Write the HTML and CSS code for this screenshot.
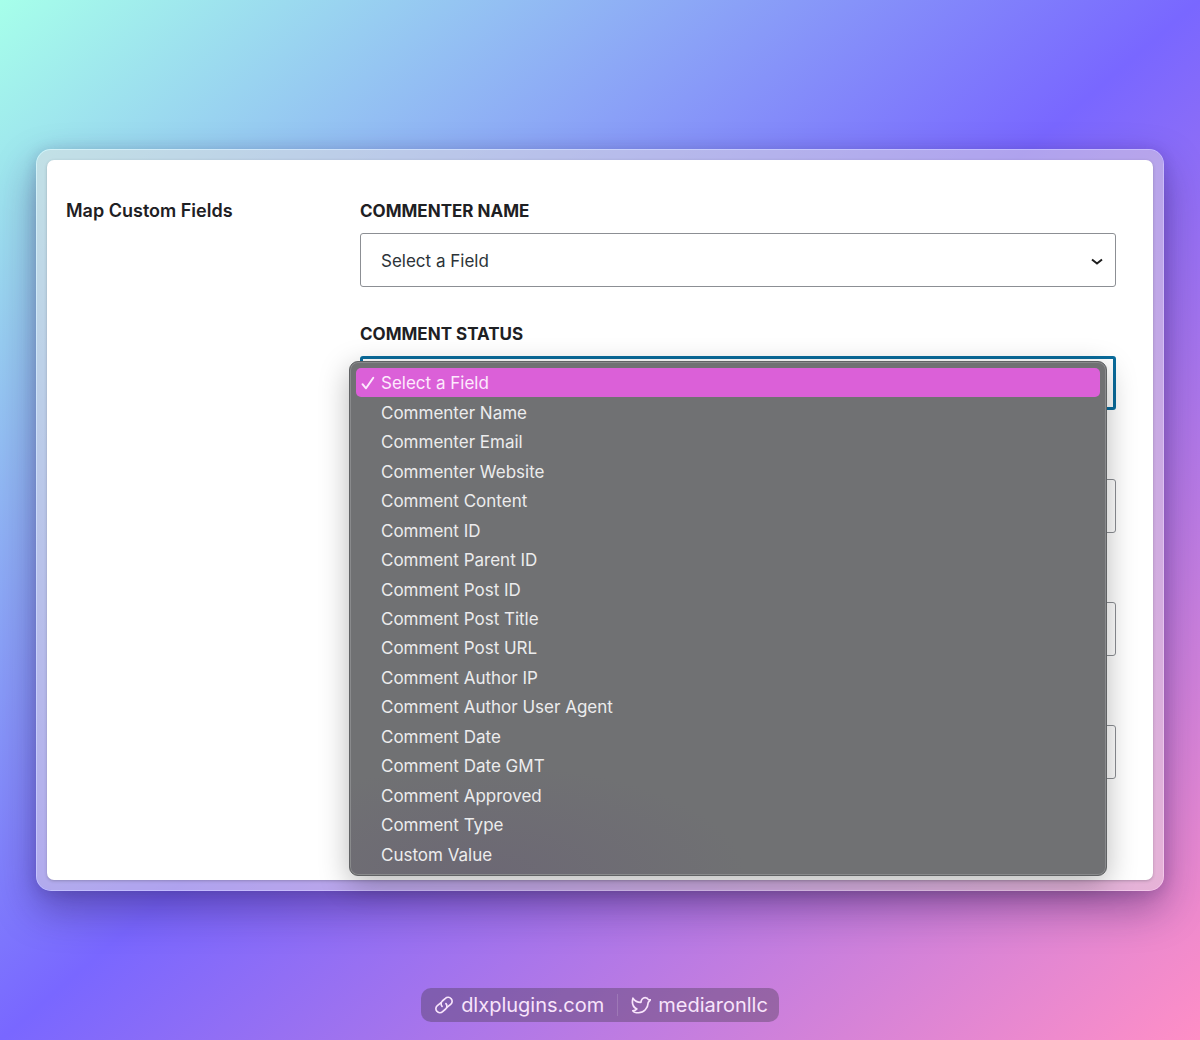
FILE: index.html
```html
<!DOCTYPE html>
<html lang="en">
<head>
    <meta charset="UTF-8">
    <meta name="viewport" content="width=device-width, initial-scale=1.0">
    <title>Map Custom Fields</title>
    <link rel="stylesheet" href="styles.css">
</head>
<body>
    <main class="frame">
        <section class="panel">
            <h2 class="panel-title">Map Custom Fields</h2>

            <form class="fields">
                <div class="field">
                    <label class="field-label" for="commenterName">Commenter Name</label>
                    <select class="field-select" id="commenterName">
                        <option>Select a Field</option>
                    </select>
                </div>

                <!-- Open field -->
                <div class="field">
                    <label class="field-label" for="commentStatus">Comment Status</label>
                    <select class="field-select active" id="commentStatus">
                        <option>Select a Field</option>
                    </select>
                    <div class="menu" role="listbox" aria-label="Comment Status">
                        <button type="button" class="menu-item selected" role="option" aria-selected="true">
                            <svg class="check" viewBox="0 0 14 14" aria-hidden="true"><path d="M1.5 8.2 L5 12.3 L12.3 1.7"/></svg>
                            Select a Field
                        </button>
                        <button type="button" class="menu-item" role="option">Commenter Name</button>
                        <button type="button" class="menu-item" role="option">Commenter Email</button>
                        <button type="button" class="menu-item" role="option">Commenter Website</button>
                        <button type="button" class="menu-item" role="option">Comment Content</button>
                        <button type="button" class="menu-item" role="option">Comment ID</button>
                        <button type="button" class="menu-item" role="option">Comment Parent ID</button>
                        <button type="button" class="menu-item" role="option">Comment Post ID</button>
                        <button type="button" class="menu-item" role="option">Comment Post Title</button>
                        <button type="button" class="menu-item" role="option">Comment Post URL</button>
                        <button type="button" class="menu-item" role="option">Comment Author IP</button>
                        <button type="button" class="menu-item" role="option">Comment Author User Agent</button>
                        <button type="button" class="menu-item" role="option">Comment Date</button>
                        <button type="button" class="menu-item" role="option">Comment Date GMT</button>
                        <button type="button" class="menu-item" role="option">Comment Approved</button>
                        <button type="button" class="menu-item" role="option">Comment Type</button>
                        <button type="button" class="menu-item" role="option">Custom Value</button>
                    </div>
                </div>

                <div class="field">
                    <select class="field-select" aria-label="Field 3"></select>
                </div>
                <div class="field">
                    <select class="field-select" aria-label="Field 4"></select>
                </div>
                <div class="field">
                    <select class="field-select" aria-label="Field 5"></select>
                </div>
            </form>
        </section>
    </main>

    <footer class="credits">
        <a class="credit" href="#">
            <svg class="credit-icon" viewBox="0 0 24 24" aria-hidden="true">
                <path d="M8.500 9.200L4 12.800a4.600 4.600 0 0 0-.5 6.800 4.600 4.600 0 0 0 6.800.4l3.700-3.200a4.600 4.600 0 0 0 .3-6.500"/>
                <path d="M15.500 14.800L20 11.200a4.600 4.600 0 0 0 .5-6.800 4.600 4.600 0 0 0-6.800-.4L10 7.200a4.600 4.600 0 0 0-.3 6.500"/>
            </svg>
            dlxplugins.com
        </a>
        <a class="credit" href="#">
            <svg class="credit-icon" viewBox="0 0 24 24" aria-hidden="true">
                <path d="M12 8.8c0-3.2 2.2-5.6 5-5.6 1.900 0 3.300 1 4 2.500h2.500l-2.800 3.200C20.300 16 15.500 21.300 9 21.300c-3.500 0-6-1-6.800-2.300 2-.2 3.800-1 4.800-2.200C2.500 14.500.8 9.500 2.300 3.800 4.500 7 8 8.900 12 8.800z"/>
            </svg>
            mediaronllc
        </a>
    </footer>
</body>
</html>
```
FILE: styles.css
```css
* {
    box-sizing: border-box;
}

body {
    display: flex;
    flex-direction: column;
    min-height: 100vh;
    margin: 0;
    padding: 149px 36px 18px;
    font-family: Inter, "Liberation Sans", sans-serif;
    color: #1e2023;
    background: linear-gradient(to bottom right, #a6ffea 0%, #7967ff 50%, #ff8fc6 100%);
}

.frame {
    padding: 10px;
    border: 1px solid rgba(255, 255, 255, 0.55);
    border-radius: 15px;
    background: rgba(230, 222, 222, 0.5);
    background-clip: padding-box;
    box-shadow: 0 18px 40px rgba(40, 20, 80, 0.4), 0 2px 14px rgba(40, 20, 80, 0.16);
}

.panel {
    display: grid;
    grid-template-columns: 294px 1fr;
    padding: 37px 37px 101px 19px;
    border-radius: 7px;
    background: white;
    box-shadow: 0 1px 3px rgba(60, 60, 70, 0.3);
}

.panel-title {
    margin: 0;
    font-size: 18px;
    font-weight: 600;
    line-height: 28px;
}

.fields {
    display: flex;
    flex-direction: column;
    gap: 33px;
}

.field {
    position: relative;
    display: flex;
    flex-direction: column;
    justify-content: flex-end;
    min-height: 90px;
}

.field-label {
    margin-bottom: 8px;
    font-size: 17px;
    font-weight: 700;
    line-height: 28px;
    text-transform: uppercase;
}

.field-select {
    width: 100%;
    height: 54px;
    padding: 2px 20px 0;
    border: 1px solid #8c8f94;
    border-radius: 3px;
    appearance: none;
    font-family: inherit;
    font-size: 17px;
    color: #2c3338;
    background: white url('data:image/svg+xml,<svg xmlns="http://www.w3.org/2000/svg" viewBox="0 0 14 8" width="14" height="8"><path d="M2 1.5l5 4 5-4" fill="none" stroke="%231e1e1e" stroke-width="2"/></svg>') no-repeat right 11px top 24px;
}

.field-select.active {
    border: 3px solid #0a6c9c;
}

/* Dropdown list */
.menu {
    position: absolute;
    top: 41px;
    left: -11px;
    right: 9px;
    z-index: 10;
    display: flex;
    flex-direction: column;
    height: 515px;
    padding: 6px;
    border: 1px solid #606264;
    border-radius: 9px;
    background: radial-gradient(ellipse 260px 110px at 18% 100%, #6c6874, transparent), #707173;
    box-shadow: inset 0 0 0 1px #898a8c, 0 8px 30px rgba(0, 0, 0, 0.28);
}

.menu-item {
    position: relative;
    flex: 1;
    padding: 1px 25px 0;
    border: none;
    border-radius: 5px;
    font-family: inherit;
    font-size: 17px;
    text-align: left;
    color: #ececed;
    background: none;
}

.menu-item.selected {
    color: #fdeafd;
    background: #db60d8;
}

.check {
    position: absolute;
    top: 8px;
    left: 5px;
    width: 14px;
    height: 14px;
    fill: none;
    stroke: currentColor;
    stroke-width: 2;
    stroke-linecap: round;
    stroke-linejoin: round;
}

/* Footer links */
.credits {
    display: flex;
    align-self: center;
    align-items: center;
    height: 34px;
    margin-top: auto;
    border-radius: 10px;
    background: rgba(75, 60, 85, 0.4);
}

.credit {
    display: flex;
    align-items: center;
    gap: 7px;
    padding: 0 13px;
    font-size: 20px;
    line-height: 22px;
    color: #f8e4fb;
    text-decoration: none;
}

.credit + .credit {
    padding: 0 11px 0 13px;
    border-left: 1px solid rgba(255, 255, 255, 0.15);
}

.credit-icon {
    width: 20px;
    height: 20px;
    fill: none;
    stroke: currentColor;
    stroke-width: 2;
    stroke-linecap: round;
    stroke-linejoin: round;
}
```
